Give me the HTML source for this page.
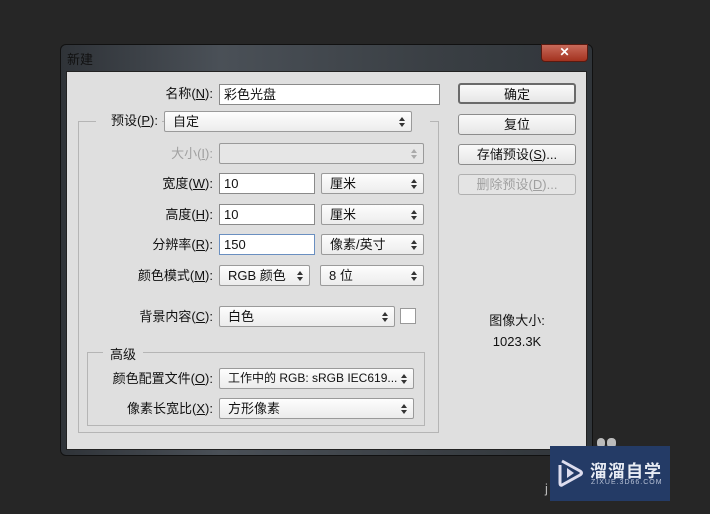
<!DOCTYPE html>
<html><head><meta charset="utf-8"><style>
*{margin:0;padding:0;box-sizing:border-box}
body{width:710px;height:514px;background:#262626;position:relative;overflow:hidden;font-family:"Liberation Sans","Noto Sans CJK SC",sans-serif;font-size:13px;color:#111}
.a{position:absolute;white-space:nowrap}
.frame{left:60px;top:44px;width:533px;height:412px;border-radius:6px;background:linear-gradient(90deg,#2f3338,#4a5057 30%,#3a3f44 70%,#30353a);border:1px solid #111}
.title{left:67px;top:49px;color:#111;font-size:13px}
.panel{left:66px;top:71px;width:521px;height:379px;background:#dfdfdf;border:1px solid #222}
.lbl{text-align:right;width:150px;left:63px;font-size:13px;line-height:16px}
.in{background:#fff;border:1px solid #8a8a8a;height:21px;padding:0 4px;font-size:13px;line-height:19px}
.sel{background:linear-gradient(#fdfdfd,#ececec);border:1px solid #9a9a9a;border-radius:2px;height:21px;padding:0 8px;font-size:13px;line-height:19px;overflow:hidden}
.sel:after{content:"";position:absolute;right:6px;top:5px;width:0;height:0;border-left:3px solid transparent;border-right:3px solid transparent;border-bottom:4px solid #333}
.sel:before{content:"";position:absolute;right:6px;top:11px;width:0;height:0;border-left:3px solid transparent;border-right:3px solid transparent;border-top:4px solid #333}
.dis{color:#a0a0a0}
.dis.sel:after{border-bottom-color:#aaa}.dis.sel:before{border-top-color:#aaa}
.btn{background:linear-gradient(#fafafa,#e6e6e6);border:1px solid #8c8c8c;border-radius:3px;height:21px;width:118px;left:458px;text-align:center;line-height:19px;font-size:13px}
.grp{border:1px solid #b5b5b5}
</style></head><body>
<div class="a frame"></div>
<div class="a" style="left:541px;top:44px;width:47px;height:18px;background:linear-gradient(#c86a5a,#a3321f);border:1px solid #5a1a10;border-radius:0 0 4px 4px;color:#fff;font-weight:bold;text-align:center;font-size:12px;line-height:15px">✕</div>
<div class="a title">新建</div>
<div class="a panel"></div>
<div class="a grp" style="left:78px;top:121px;width:361px;height:312px"></div>
<div class="a grp" style="left:87px;top:352px;width:338px;height:74px"></div>
<div class="a" style="left:103px;top:344px;width:40px;background:#dfdfdf;text-align:center">高级</div>

<div class="a lbl" style="top:86px">名称(<u>N</u>):</div>
<div class="a in" style="left:219px;top:84px;width:221px">彩色光盘</div>
<div class="a" style="left:96px;top:111px;width:66px;background:#dfdfdf;text-align:right;padding-right:4px;line-height:20px">预设(<u>P</u>):</div>
<div class="a sel" style="left:164px;top:111px;width:248px">自定</div>
<div class="a" style="left:412px;top:115px;width:18px;height:10px;background:#dfdfdf"></div>
<div class="a lbl dis" style="top:146px">大小(<u>I</u>):</div>
<div class="a sel dis" style="left:219px;top:143px;width:205px;background:#e6e6e6"></div>
<div class="a lbl" style="top:176px">宽度(<u>W</u>):</div>
<div class="a in" style="left:219px;top:173px;width:96px">10</div>
<div class="a sel" style="left:321px;top:173px;width:103px">厘米</div>
<div class="a lbl" style="top:207px">高度(<u>H</u>):</div>
<div class="a in" style="left:219px;top:204px;width:96px">10</div>
<div class="a sel" style="left:321px;top:204px;width:103px">厘米</div>
<div class="a lbl" style="top:237px">分辨率(<u>R</u>):</div>
<div class="a in" style="left:219px;top:234px;width:96px;border-color:#6a8fc0">150</div>
<div class="a sel" style="left:321px;top:234px;width:103px">像素/英寸</div>
<div class="a lbl" style="top:268px">颜色模式(<u>M</u>):</div>
<div class="a sel" style="left:219px;top:265px;width:91px">RGB 颜色</div>
<div class="a sel" style="left:320px;top:265px;width:104px">8 位</div>
<div class="a lbl" style="top:309px">背景内容(<u>C</u>):</div>
<div class="a sel" style="left:219px;top:306px;width:176px">白色</div>
<div class="a" style="left:400px;top:308px;width:16px;height:16px;background:#fff;border:1px solid #999"></div>
<div class="a lbl" style="top:371px">颜色配置文件(<u>O</u>):</div>
<div class="a sel" style="left:219px;top:368px;width:195px;font-size:12px">工作中的 RGB: sRGB IEC619...</div>
<div class="a lbl" style="top:401px">像素长宽比(<u>X</u>):</div>
<div class="a sel" style="left:219px;top:398px;width:195px">方形像素</div>

<div class="a btn" style="top:83px;border:2px solid #6a6a6a">确定</div>
<div class="a btn" style="top:114px">复位</div>
<div class="a btn" style="top:144px">存储预设(<u>S</u>)...</div>
<div class="a btn dis" style="top:174px;background:#e4e4e4;border-color:#b0b0b0">删除预设(<u>D</u>)...</div>
<div class="a" style="left:458px;top:310px;width:118px;text-align:center">图像大小:</div>
<div class="a" style="left:458px;top:334px;width:118px;text-align:center">1023.3K</div>

<div class="a" style="left:597px;top:438px;width:8px;height:10px;border-radius:4px;background:#bbb"></div>
<div class="a" style="left:607px;top:438px;width:9px;height:10px;border-radius:4px;background:#bbb"></div>
<div class="a" style="left:545px;top:481px;color:#bbb;font-size:13px">j</div>
<div class="a" style="left:550px;top:446px;width:120px;height:55px;background:#243b66"></div>
<svg class="a" style="left:557px;top:457px" width="28" height="32" viewBox="0 0 28 32"><path d="M5 4 L23 14 Q26 16 23 18 L5 28 Q3 29 3 26 L3 8" fill="none" stroke="#dde" stroke-width="3" stroke-linejoin="round"/><path d="M10 11 L17 16 L10 21Z" fill="#dde"/></svg>
<div class="a" style="left:590px;top:457px;color:#e8ecf4;font-size:17px;font-weight:bold;letter-spacing:1px">溜溜自学</div>
<div class="a" style="left:591px;top:479px;color:#b8c2d6;font-size:7px;letter-spacing:1px">ZIXUE.3D66.COM</div>
</body></html>
